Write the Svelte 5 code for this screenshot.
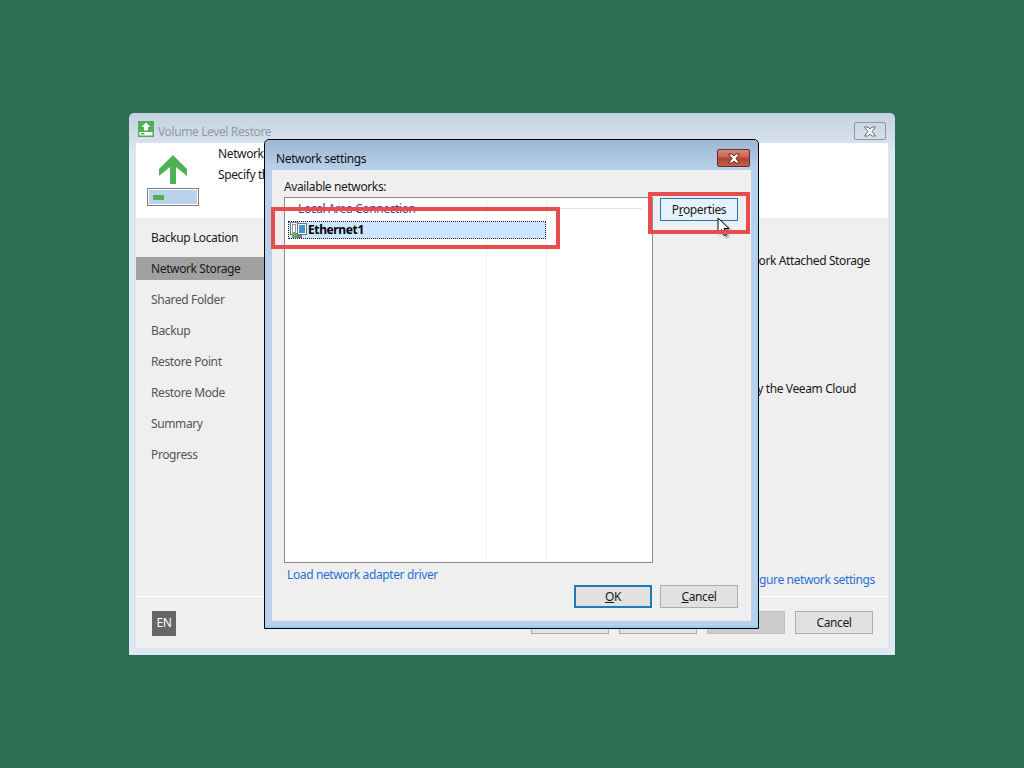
<script>
  const steps = ['Backup Location','Network Storage','Shared Folder','Backup','Restore Point','Restore Mode','Summary','Progress'];
</script>

<div class="desktop">
  <section class="wizard">
    <header class="wiz-title">
      <svg class="app-icon" width="16" height="16" viewBox="0 0 16 16">
        <rect width="16" height="16" fill="#4fae57"/>
        <path d="M8 1.500 12.500 6H10v3.500H6V6H3.500z" fill="#fff"/>
        <rect x="1.500" y="11" width="13" height="3.500" fill="#fff"/>
        <rect x="3" y="12" width="3.500" height="1.500" fill="#4fae57"/>
      </svg>
      <span>Volume Level Restore</span>
      <div class="wiz-close">
        <svg width="14" height="11" viewBox="0 0 14 11"><path d="M1.500 1H5L7 3 9 1H12.500L9 5.500 12.500 10H9L7 8 5 10H1.500L5 5.500z" fill="#fff" stroke="#66717d" stroke-width="1"/></svg>
      </div>
    </header>
    <div class="wiz-body">
      <div class="wiz-head">
        <div class="head-icon">
          <svg width="28" height="29" viewBox="0 0 28 29">
            <path d="M14 0 28 14V21L17 12V29H11V12L0 21V14z" fill="#4fb056"/>
          </svg>
          <div class="disk"><i></i></div>
        </div>
        <div class="head-text">
          <p>Network Storage</p>
          <p>Specify the network settings</p>
        </div>
      </div>
      <div class="wiz-main">
        <nav class="steps">
          {#each steps as s, i}
            <div class="step" class:active={i === 1}>{s}</div>
          {/each}
        </nav>
        <div class="pane">
          <div class="option first">Network Attached Storage</div>
          <div class="option second">Managed by the Veeam Cloud</div>
          <a class="cfg">Configure network settings</a>
        </div>
      </div>
      <footer class="wiz-foot">
        <div class="lang">EN</div>
        <div class="foot-btns">
          <button class="btn">&nbsp;</button>
          <button class="btn">&nbsp;</button>
          <button class="btn off">&nbsp;</button>
          <button class="btn">Cancel</button>
        </div>
      </footer>
    </div>
  </section>

  <section class="dialog">
    <header class="dlg-title">
      <span>Network settings</span>
      <div class="dlg-close">
        <svg width="14" height="11" viewBox="0 0 14 11"><path d="M1.500 1H5L7 3 9 1H12.500L9 5.500 12.500 10H9L7 8 5 10H1.500L5 5.500z" fill="#fff" stroke="#6b2a22" stroke-width="1"/></svg>
      </div>
    </header>
    <div class="dlg-body">
      <label class="lbl">Available networks:</label>
      <div class="dlg-row">
        <div class="list">
          <div class="col c1"></div>
          <div class="col c2"></div>
          <div class="group"><span>Local Area Connection</span></div>
          <div class="item">
            <svg width="17" height="16" viewBox="0 0 17 16">
              <rect x="0.500" y="0.500" width="7" height="12" fill="#fff" stroke="#777"/>
              <rect x="2.500" y="2.500" width="3" height="8" fill="#fff" stroke="#999"/>
              <rect x="7.500" y="1.500" width="9" height="11" fill="#fff" stroke="#777"/>
              <rect x="9" y="3" width="6" height="8" fill="#3f95cf"/>
              <rect x="2" y="11" width="5" height="5" fill="#5cb360"/>
              <rect x="7" y="13" width="5" height="3" fill="#777"/>
            </svg>
            <b>Ethernet1</b>
          </div>
        </div>
        <button class="btn props focus">P<u>r</u>operties</button>
      </div>
      <a class="driver">Load network adapter driver</a>
      <div class="dlg-btns">
        <button class="btn ok"><u>O</u>K</button>
        <button class="btn"><u>C</u>ancel</button>
      </div>
    </div>
  </section>

  <svg class="cursor" width="16" height="24" viewBox="0 0 16 24">
    <path d="M1 1V16L4.500 12.500 7 18.500 9.500 17.500 7 11.500H12z" fill="#fff" stroke="#000" stroke-width="1"/>
  </svg>
  <div class="mark m1"></div>
  <div class="mark m2"></div>
</div>

<style>
  :global(body) { margin: 0; background: #2b6e52; }
  .desktop {
    position: relative; width: 1024px; height: 768px; overflow: hidden;
    background: #2b6e52; color: #1a1a1a;
    font: 12px/16px "Noto Sans", "Open Sans", sans-serif;
    letter-spacing: -0.38px;
  }
  p { margin: 0; }
  .wizard {
    position: absolute; left: 129px; top: 113px; width: 766px; height: 542px;
    box-sizing: border-box; padding: 0 7px 7px;
    background: linear-gradient(#c4d2df 0, #dce8f3 40px);
    border-radius: 5px 5px 0 0;
    display: flex; flex-direction: column;
  }
  .wiz-title {
    height: 30px; flex: none; display: flex; align-items: center; gap: 4px;
    color: #8f9ba4; padding-left: 2px; padding-top: 6px; box-sizing: border-box;
  }
  .wiz-title span { padding-top: 1px; }
  .app-icon { flex: none; margin-top: -4px; }
  .wiz-close {
    position: absolute; right: 9px; top: 9px; width: 32px; height: 18px; box-sizing: border-box;
    border: 1px solid #8d99a5; border-radius: 2px;
    display: flex; align-items: center; justify-content: center;
  }
  .wiz-body { flex: 1; background: #efefef; display: flex; flex-direction: column; min-height: 0; }
  .wiz-head { height: 75px; flex: none; background: #fff; display: flex; }
  .head-icon { width: 74px; padding: 12px 0 0 11px; box-sizing: border-box; display: flex; flex-direction: column; align-items: flex-start; }
  .head-icon svg { flex: none; margin-left: 12px; }
  .disk {
    margin-top: 4px; width: 52px; height: 18px; flex: none; box-sizing: border-box;
    border: 1px solid #7d7d7d; background: #b9d3ec; box-shadow: inset 0 0 0 1px #fff;
    display: flex; align-items: center; padding-left: 5px;
  }
  .disk i { display: block; width: 11px; height: 5px; background: #4fb056; }
  .head-text { padding: 3px 0 0 8px; display: flex; flex-direction: column; gap: 5px; }
  .wiz-main { flex: 1; display: flex; min-height: 0; }
  .steps { width: 136px; flex: none; padding-top: 8px; display: flex; flex-direction: column; gap: 8px; }
  .step { height: 23px; line-height: 24px; padding-left: 15px; color: #555; }
  .step:first-child { color: #1a1a1a; }
  .step.active { background: #a0a0a0; color: #1a1a1a; }
  .pane { flex: 1; position: relative; display: flex; flex-direction: column; align-items: flex-end; padding: 35px 18px 0 0; }
  .option { white-space: nowrap; }
  .second { margin-top: 112px; margin-right: 14px; }
  .cfg { margin-top: auto; margin-bottom: 8px; margin-right: -5px; color: #2a6fd6; }
  .wiz-foot {
    height: 52px; flex: none; box-sizing: border-box; border-top: 1px solid #fff;
    display: flex; align-items: flex-start; justify-content: space-between;
    padding: 14px 15px 0 16px;
  }
  .lang { width: 24px; height: 25px; background: #666; color: #fff; text-align: center; line-height: 24px; }
  .foot-btns { display: flex; gap: 10px; }
  .btn {
    width: 78px; height: 23px; padding: 0; box-sizing: border-box;
    border: 1px solid #adadad; background: #e1e1e1; color: #1a1a1a;
    font: inherit; letter-spacing: inherit; line-height: 19px;
  }
  .btn.off { background: #cccccc; border-color: #bfbfbf; }
  .dialog {
    position: absolute; left: 264px; top: 139px; width: 495px; height: 490px;
    box-sizing: border-box; border: 1px solid #000; border-radius: 5px 5px 0 0;
    padding: 0 7px 7px; background: #b9d1ea;
    box-shadow: inset 0 -2px 0 #8fd0f0, inset -2px 0 0 #a8d4f0;
    display: flex; flex-direction: column;
  }
  .dlg-title {
    height: 30px; flex: none; margin: 0 -7px; padding: 7px 0 0 11px; box-sizing: border-box;
    background: linear-gradient(#9cb8d5, #b9d1ea); display: flex; align-items: center;
    border-radius: 5px 5px 0 0; position: relative; color: #111;
  }
  .dlg-close {
    position: absolute; right: 8px; top: 9px; width: 33px; height: 18px; box-sizing: border-box;
    border: 1px solid #6b2a22; border-radius: 2px;
    background: linear-gradient(#d58a7c 0%, #c9624f 45%, #b2412c 50%, #c2604c 100%);
    display: flex; align-items: center; justify-content: center;
  }
  .dlg-body { flex: 1; background: #efefef; padding: 9px 13px 0 12px; display: flex; flex-direction: column; min-height: 0; }
  .lbl { height: 18px; flex: none; }
  .dlg-row { display: flex; align-items: flex-start; gap: 7px; }
  .list {
    position: relative; width: 369px; height: 366px; box-sizing: border-box; flex: none;
    border: 1px solid #8a8a8a; background: #fff; overflow: hidden;
  }
  .col { position: absolute; top: 0; bottom: 0; width: 1px; background: #eef1f4; }
  .c1 { left: 201px; } .c2 { left: 261px; }
  .group {
    position: relative; height: 10px; margin: 0 10px 0 0;
    border-bottom: 1px solid #dde3ea;
  }
  .group span { position: absolute; left: 13px; top: 3px; color: #3f3f8f; white-space: nowrap; background: #fff; }
  .item {
    position: relative; margin: 12px 106px 0 3px; height: 18px; box-sizing: border-box;
    border: 1px dotted #222; background: #cce6ff; display: flex; align-items: center; gap: 2px; color: #000;
  }
  .item svg { flex: none; margin-left: 1px; margin-right: -1px; overflow: visible; }
  .item b { font-weight: 700; }
  .props { margin-top: 1px; height: 23px; }
  .focus { border-color: #1f7ab8; background: #e5f1fb; }
  .driver { margin-top: 4px; margin-left: 3px; color: #2a6fd6; height: 16px; flex: none; }
  .dlg-btns { display: flex; justify-content: flex-end; gap: 8px; margin-top: 2px; }
  .ok { border: 2px solid #1f7ab8; }
  .mark { position: absolute; box-sizing: border-box; border: 4px solid #e84c4f; }
  .m1 { left: 271px; top: 207px; width: 289px; height: 42px; }
  .m2 { left: 648px; top: 192px; width: 102px; height: 42px; }
  .cursor { position: absolute; left: 717px; top: 217px; filter: drop-shadow(2px 2px 1px rgba(0,0,0,.4)); }
</style>
